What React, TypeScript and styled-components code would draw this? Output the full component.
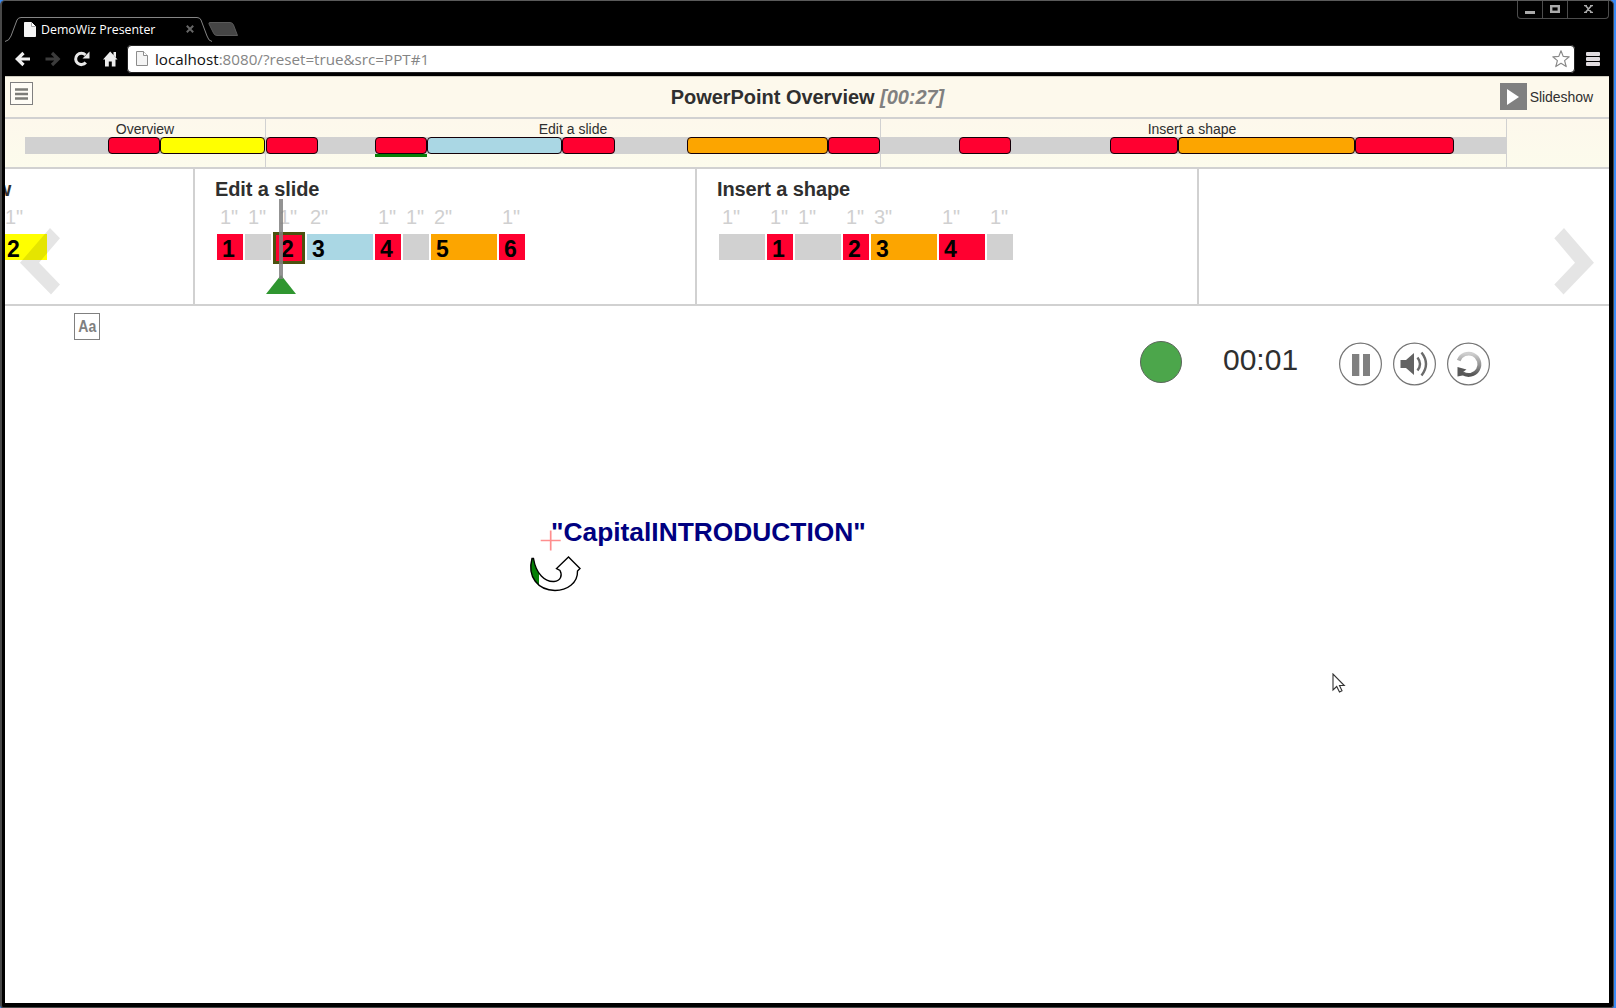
import React from "react";
import styled, { createGlobalStyle } from "styled-components";

const RED = "#ff0030";
const YELLOW = "#ffff00";
const BLUE = "#aad7e4";
const ORANGE = "#fca500";
const GRAY = "#d1d1d1";

const Global = createGlobalStyle`
  * { box-sizing: border-box; }
  body { margin: 0; background: #3a8bf5; font-family: "Liberation Sans", Arial, sans-serif; color: #2f2f2f; }
  svg { display: block; }
`;

const Window = styled.div`
  width: 1614px;
  height: 1008px;
  display: flex;
  flex-direction: column;
  background: #000;
  border: 1px solid #484848;
  border-left-width: 2px;
  border-top-color: #5a5a5a;
  border-radius: 5px 5px 3px 3px;
  padding: 0 4px 4px 3px;
  overflow: hidden;
`;

const TitleBar = styled.div`
  height: 41px;
  display: flex;
  justify-content: space-between;
`;

const TabStrip = styled.div`
  display: flex;
  align-items: flex-start;
  padding-top: 15px;
`;

const Tab = styled.div`
  position: relative;
  width: 203px;
  height: 26px;
  padding: 0 14px 0 19px;
  display: flex;
  align-items: center;
  color: #fff;
  font: 12.35px/24px "Open Sans", "Noto Sans", sans-serif;
`;

const TabOutline = styled.svg`
  position: absolute;
  left: 0;
  top: 0;
`;

const TabTitle = styled.span`
  flex: 1;
  padding: 1px 0 0 5px;
  white-space: nowrap;
`;

const WindowButtons = styled.div`
  display: flex;
  height: 18px;
  border: 1px solid #4c4c4c;
  border-top: 0;
  border-radius: 0 0 4px 4px;
`;

const WindowButton = styled.div<{ $w: number }>`
  width: ${(p) => p.$w}px;
  display: flex;
  justify-content: center;
  padding-top: 4px;
  & + & { border-left: 1px solid #4c4c4c; }
`;

const Toolbar = styled.div`
  height: 34px;
  padding: 2px 9px 3px 10px;
  display: flex;
  align-items: center;
`;

const NavIcons = styled.div`
  width: 112px;
  display: flex;
  gap: 12px;
`;

const AddressBar = styled.div`
  width: 1448px;
  height: 28px;
  display: flex;
  align-items: center;
  gap: 7px;
  padding: 0 4px 0 8px;
  background: #fff;
  border: 1px solid #8a8a8a;
  outline: 1px solid #222;
  outline-offset: -1px;
  border-radius: 4px;
  font: 15.2px/24px "Open Sans", "Noto Sans", sans-serif;
  color: #858585;
`;

const Url = styled.div`
  flex: 1;
  padding-top: 1px;
  white-space: nowrap;
  b { font-weight: 400; color: #111; }
`;

const BrowserMenu = styled.div`
  margin-left: auto;
`;

const Page = styled.div`
  flex: 1;
  display: flex;
  flex-direction: column;
  background: #fff;
  border-top: 1px solid #cfccc0;
  overflow: hidden;
`;

const Header = styled.header`
  height: 42px;
  padding: 5px 16px 0 5px;
  display: grid;
  grid-template-columns: 1fr auto 1fr;
  align-items: start;
  background: #fdf9ec;
  border-bottom: 2px solid ${GRAY};
`;

const MenuButton = styled.button`
  width: 23px;
  height: 23px;
  padding: 0;
  display: grid;
  place-items: center;
  background: #fffdf6;
  border: 1px solid #808080;
`;

const Title = styled.h1`
  margin: 4px 0 0;
  padding-left: 12px;
  font-size: 20px;
  line-height: 23px;
  letter-spacing: -0.04px;
  white-space: pre;
  em { color: #808080; }
`;

const Slideshow = styled.div`
  justify-self: end;
  display: flex;
  align-items: center;
  gap: 3px;
  padding-top: 1px;
  font-size: 14px;
  letter-spacing: -0.05px;
`;

const PlayBox = styled.div`
  width: 27px;
  height: 27px;
  display: grid;
  place-items: center;
  background: #808080;
`;

const Overview = styled.nav`
  height: 50px;
  padding-left: 20px;
  display: flex;
  background: linear-gradient(#fdf8ec, #fcfbec);
  border-bottom: 2px solid ${GRAY};
`;

const Chapter = styled.div<{ $w: number }>`
  width: ${(p) => p.$w}px;
  border-right: 1px solid ${GRAY};
`;

const ChapterName = styled.div<{ $trim?: number }>`
  height: 18px;
  padding-right: ${(p) => p.$trim ?? 0}px;
  font-size: 14px;
  line-height: 20px;
  text-align: center;
`;

const ChapterBar = styled.div`
  height: 17px;
  display: flex;
  background: ${GRAY};
`;

const Span = styled.div<{ $w: number; $c?: string; $active?: boolean }>`
  position: relative;
  width: ${(p) => p.$w}px;
  height: 17px;
  background: ${(p) => p.$c ?? "transparent"};
  border: ${(p) => (p.$c ? "1px solid #140008" : "0")};
  border-radius: 4px;
  &::after {
    content: "";
    display: ${(p) => (p.$active ? "block" : "none")};
    position: absolute;
    left: -1px;
    right: -1px;
    top: 16px;
    height: 3px;
    background: #087f08;
  }
`;

const Detail = styled.section`
  position: relative;
  height: 137px;
  display: flex;
  overflow: hidden;
  border-bottom: 2px solid ${GRAY};
`;

const Column = styled.div<{ $w: number }>`
  flex: none;
  width: ${(p) => p.$w}px;
  padding-left: 20px;
  border-right: 2px solid ${GRAY};
`;

const ColumnTitle = styled.h2<{ $shift?: number }>`
  margin: 9px 0 0 ${(p) => p.$shift ?? 0}px;
  font-size: 20px;
  line-height: 23px;
  letter-spacing: -0.1px;
  white-space: nowrap;
`;

const Steps = styled.div<{ $shift?: number }>`
  display: flex;
  gap: 2px;
  margin-left: ${(p) => p.$shift ?? 0}px;
  padding: 5px 0 0 2px;
`;

const Step = styled.div`
  flex: none;
`;

const Duration = styled.div<{ $active?: boolean }>`
  height: 28px;
  padding-left: ${(p) => (p.$active ? 6 : 3)}px;
  font-size: 20px;
  line-height: 23px;
  color: #d0d0d0;
`;

const StepBox = styled.div<{ $w: number; $c: string; $active?: boolean }>`
  width: ${(p) => p.$w + (p.$active ? 6 : 0)}px;
  height: ${(p) => (p.$active ? 32 : 26)}px;
  margin-top: ${(p) => (p.$active ? -2 : 0)}px;
  padding-left: 5px;
  background: ${(p) => p.$c};
  border: ${(p) => (p.$active ? "3px solid #4b5210" : "0")};
  color: #000;
  font-weight: bold;
  font-size: 23px;
  line-height: ${(p) => (p.$active ? 29 : 30)}px;
`;

const Playhead = styled.svg`
  position: absolute;
  left: 261px;
  top: 30px;
`;

const Chevron = styled.svg<{ $x: number }>`
  position: absolute;
  left: ${(p) => p.$x}px;
  top: 59px;
`;

const Stage = styled.main`
  position: relative;
  flex: 1;
`;

const StageBar = styled.div`
  height: 82px;
  padding-left: 69px;
  display: flex;
  align-items: flex-start;
`;

const CaptionToggle = styled.button`
  width: 26px;
  height: 27px;
  margin: 7px 0 0;
  padding: 0;
  display: grid;
  place-items: center;
  background: #fff;
  border: 1px solid #808080;
  color: #808080;
  font: bold 16px/25px "Liberation Sans", Arial, sans-serif;
  span { transform: scaleX(0.88); }
`;

const Status = styled.div`
  width: 42px;
  height: 42px;
  margin: 35px 0 0 1040px;
  border-radius: 50%;
  background: #4ca64b;
  border: 1px solid #5a665a;
`;

const Timer = styled.div`
  width: 116px;
  margin: 37px 0 0 41px;
  font-size: 30px;
  line-height: 34px;
`;

const RoundButtons = styled.div`
  display: flex;
  gap: 11px;
  margin-top: 36px;
`;

const Caption = styled.div`
  position: absolute;
  left: 546px;
  top: 211px;
  font-size: 26.35px;
  line-height: 30px;
  font-weight: bold;
  color: #000080;
`;

const Marks = styled.svg`
  position: absolute;
  left: 520px;
  top: 224px;
`;

const Pointer = styled.svg`
  position: absolute;
  left: 1327px;
  top: 367px;
`;

type Seg = [number, string?, boolean?];
const chapters: { name: string; w: number; trim?: number; spans: Seg[] }[] = [
  { name: "Overview", w: 241, spans: [[83], [52, RED], [105, YELLOW]] },
  {
    name: "Edit a slide",
    w: 615,
    spans: [[52, RED], [57], [52, RED, true], [135, BLUE], [53, RED], [72], [141, ORANGE], [52, RED]],
  },
  { name: "Insert a shape", w: 626, trim: 3, spans: [[78], [52, RED], [99], [68, RED], [177, ORANGE], [99, RED], [52]] },
];

type StepData = { t: string; w: number; c: string; n?: number; active?: boolean };
const columns: { name: string; w: number; titleShift?: number; stepShift?: number; steps: StepData[] }[] = [
  { name: "Overview", w: 190, titleShift: -102, stepShift: -25, steps: [
    { t: '1"', w: 45, c: YELLOW, n: 2 },
  ] },
  { name: "Edit a slide", w: 502, steps: [
    { t: '1"', w: 26, c: RED, n: 1 },
    { t: '1"', w: 26, c: GRAY },
    { t: '1"', w: 26, c: RED, n: 2, active: true },
    { t: '2"', w: 66, c: BLUE, n: 3 },
    { t: '1"', w: 26, c: RED, n: 4 },
    { t: '1"', w: 26, c: GRAY },
    { t: '2"', w: 66, c: ORANGE, n: 5 },
    { t: '1"', w: 26, c: RED, n: 6 },
  ] },
  { name: "Insert a shape", w: 502, steps: [
    { t: '1"', w: 46, c: GRAY },
    { t: '1"', w: 26, c: RED, n: 1 },
    { t: '1"', w: 46, c: GRAY },
    { t: '1"', w: 26, c: RED, n: 2 },
    { t: '3"', w: 66, c: ORANGE, n: 3 },
    { t: '1"', w: 46, c: RED, n: 4 },
    { t: '1"', w: 26, c: GRAY },
  ] },
];

const TURN =
  "M533.500 558.500C536 574 545 582 554 581.500C561 581 562.500 575 560 570.500L556.500 568.500L568.500 557L580 568.500L577.500 571C578 583 567 590.500 555 590.500C538 590 527 577 532 558.500Z";

const PageIcon = ({ stroke }: { stroke?: string }) => (
  <svg width="12" height="15" viewBox="0 0 12 15">
    <path d="M.5.5H7.5L11.5 4.5V14.5H.5Z" fill="#f4f4f4" stroke={stroke ?? "#f4f4f4"} />
    <path d="M7.5.5V4.5H11.5" fill="#fff" stroke={stroke ?? "#aaa"} />
  </svg>
);

const Arrow = ({ back }: { back?: boolean }) => (
  <svg width="17" height="16" viewBox="0 0 17 16">
    <path
      d="M1.5 8H13M8 2L14.2 8L8 14"
      transform={back ? "translate(16.5 0) scale(-1 1)" : undefined}
      fill="none"
      stroke={back ? "#f0f0f0" : "#3c3c3c"}
      strokeWidth="3.2"
    />
  </svg>
);

const Ring = ({ children }: { children: React.ReactNode }) => (
  <svg width="43" height="44" viewBox="0 0 43 44">
    <circle cx="21.5" cy="22" r="20.9" fill="#fff" stroke="#757575" strokeWidth="1.2" />
    {children}
  </svg>
);

export default function App() {
  return (
    <>
      <Global />
      <Window>
        <TitleBar>
          <TabStrip>
            <Tab>
              <TabOutline width="208" height="27" viewBox="0 0 208 27">
                <path
                  d="M0 25.5Q4 25 6 20L12 4Q13.2 1.5 16 1.5H192Q195 1.5 196 4L202 20Q203.500 25 207 25.500"
                  fill="none"
                  stroke="#858585"
                />
              </TabOutline>
              <PageIcon />
              <TabTitle>DemoWiz Presenter</TabTitle>
              <svg width="8" height="8" viewBox="0 0 8 8">
                <path d="M.8.8L7.200 7.200M7.200.8L.8 7.200" stroke="#666" strokeWidth="2" />
              </svg>
            </Tab>
            <svg width="32" height="22" viewBox="0 0 32 22">
              <path d="M2 6.500H22Q24.500 6.500 25.500 9L29.500 19.500H9Q6.500 19.500 5.500 17L1 8Q.5 6.500 2 6.500Z" fill="#454545" stroke="#5a5a5a" />
            </svg>
          </TabStrip>
          <WindowButtons>
            <WindowButton $w={24}>
              <svg width="10" height="9"><rect y="6" width="10" height="3" fill="#aaa" /></svg>
            </WindowButton>
            <WindowButton $w={25}>
              <svg width="10" height="8"><rect x="1.200" y="1.200" width="7.600" height="5.600" fill="none" stroke="#aaa" strokeWidth="2.400" /></svg>
            </WindowButton>
            <WindowButton $w={41}>
              <svg width="9" height="8"><path d="M1 0L8 8M8 0L1 8M0 .5H3M6 .5H9M0 7.500H3M6 7.500H9" stroke="#aaa" strokeWidth="1.600" /></svg>
            </WindowButton>
          </WindowButtons>
        </TitleBar>
        <Toolbar>
          <NavIcons>
            <Arrow back />
            <Arrow />
            <svg width="18" height="16" viewBox="0 0 18 16">
              <path d="M12.800 11.500A5.700 5.700 0 1 1 12.500 4" fill="none" stroke="#e8e8e8" strokeWidth="3" />
              <path d="M16.500.500V7.500H9.500Z" fill="#e8e8e8" />
            </svg>
            <svg width="15" height="16" viewBox="0 0 15 16">
              <path d="M7.200 .5L14.500 8.500H12.500V15.500H8.800V10.500H5.800V15.500H2V8.500H0ZM10.500 1H13V6.500L10.500 4Z" fill="#ececec" />
            </svg>
          </NavIcons>
          <AddressBar>
            <PageIcon stroke="#8c8c8c" />
            <Url><b>localhost</b>:8080/?reset=true&amp;src=PPT#1</Url>
            <svg width="18" height="18" viewBox="0 0 18 18">
              <path d="M9 .8L11.200 6.400L17.200 6.800L12.600 10.600L14.200 16.600L9 13.300L3.800 16.600L5.400 10.600L.8 6.800L6.800 6.400Z" fill="#fff" stroke="#8a8a8a" strokeWidth="1.200" strokeLinejoin="round" />
            </svg>
          </AddressBar>
          <BrowserMenu>
            <svg width="14" height="16">
              <rect y="1" width="14" height="4" rx="1" fill="#e0dcdf" />
              <rect y="6" width="14" height="4" rx="1" fill="#e0dcdf" />
              <rect y="11" width="14" height="4" rx="1" fill="#e0dcdf" />
            </svg>
          </BrowserMenu>
        </Toolbar>
        <Page>
          <Header>
            <MenuButton>
              <svg width="13" height="12">
                <path d="M0 1.500H13M0 6H13M0 10.500H13" stroke="#7d7d78" strokeWidth="2.500" />
              </svg>
            </MenuButton>
            <Title>PowerPoint Overview <em>[00:27]</em></Title>
            <Slideshow>
              <PlayBox>
                <svg width="12" height="16"><path d="M0 0L12 8L0 16Z" fill="#fff" /></svg>
              </PlayBox>
              Slideshow
            </Slideshow>
          </Header>
          <Overview>
            {chapters.map((ch) => (
              <Chapter key={ch.name} $w={ch.w}>
                <ChapterName $trim={ch.trim}>{ch.name}</ChapterName>
                <ChapterBar>
                  {ch.spans.map(([w, c, active], i) => (
                    <Span key={i} $w={w} $c={c} $active={active} />
                  ))}
                </ChapterBar>
              </Chapter>
            ))}
          </Overview>
          <Detail>
            {columns.map((col) => (
              <Column key={col.name} $w={col.w}>
                <ColumnTitle $shift={col.titleShift}>{col.name}</ColumnTitle>
                <Steps $shift={col.stepShift}>
                  {col.steps.map((s, i) => (
                    <Step key={i}>
                      <Duration $active={s.active}>{s.t}</Duration>
                      <StepBox $w={s.w} $c={s.c} $active={s.active}>{s.n}</StepBox>
                    </Step>
                  ))}
                </Steps>
              </Column>
            ))}
            <Playhead width="30" height="96" viewBox="0 0 30 96">
              <path d="M15 76L30 95H0Z" fill="#2f9630" />
              <rect x="13" y="0" width="4" height="80" fill="#808080" fillOpacity=".85" />
            </Playhead>
            <Chevron $x={15} width="40" height="67" viewBox="0 0 40 67">
              <path d="M30 0L40 10.300L19 34.700L40 56.500L31 66.500L0 34.700Z" fillOpacity=".1" />
            </Chevron>
            <Chevron $x={1549} width="40" height="67" viewBox="0 0 40 67">
              <path d="M10 0L.300 10.300L21 34.700L.300 56.500L9.500 66.500L40 34.700Z" fillOpacity=".1" />
            </Chevron>
          </Detail>
          <Stage>
            <StageBar>
              <CaptionToggle><span>Aa</span></CaptionToggle>
              <Status />
              <Timer>00:01</Timer>
              <RoundButtons>
                <Ring>
                  <path d="M13 12H20.300V34H13ZM24 12H31V34H24Z" fill="#808080" />
                </Ring>
                <Ring>
                  <path d="M7.500 18H13L21 11V33L13 26H7.500Z" fill="#636363" />
                  <path d="M24.500 15.500Q29.500 22 24.500 28.500" fill="none" stroke="#6a6a6a" strokeWidth="2.400" />
                  <path d="M28.500 10.500Q37.500 22 28.500 33.500" fill="none" stroke="#6a6a6a" strokeWidth="2.400" />
                </Ring>
                <Ring>
                  <defs>
                    <linearGradient id="fade" x1="0" y1="0" x2="0" y2="1">
                      <stop offset="0" stopColor="#cfcfcf" />
                      <stop offset=".6" stopColor="#8c8c8c" />
                      <stop offset="1" stopColor="#555" />
                    </linearGradient>
                  </defs>
                  <path d="M11.700 18.500A10.700 10.700 0 1 1 15.500 31" fill="none" stroke="url(#fade)" strokeWidth="3.800" />
                  <path d="M10.500 25L19.500 27.500L16 30L18 33L10.500 34.500Z" fill="#585858" />
                </Ring>
              </RoundButtons>
            </StageBar>
            <Caption>"CapitalINTRODUCTION"</Caption>
            <Marks width="70" height="65" viewBox="525 530 70 65">
              <path d="M550.700 530.500V550.500M540.700 540.500H560.700" stroke="#ff8e8e" strokeWidth="1.700" />
              <clipPath id="progress"><rect x="525" y="550" width="14" height="50" /></clipPath>
              <path d={TURN} fill="#fff" />
              <path d={TURN} clipPath="url(#progress)" fill="#078007" />
              <path d={TURN} fill="none" stroke="#000" strokeWidth="1.400" />
            </Marks>
            <Pointer width="14" height="20" viewBox="0 0 14 20">
              <path d="M1 1V17L4.700 13.500L7.500 19L10 17.800L7.500 12.500H12.300Z" fill="#fff" stroke="#333" strokeWidth="1.100" />
            </Pointer>
          </Stage>
        </Page>
      </Window>
    </>
  );
}
